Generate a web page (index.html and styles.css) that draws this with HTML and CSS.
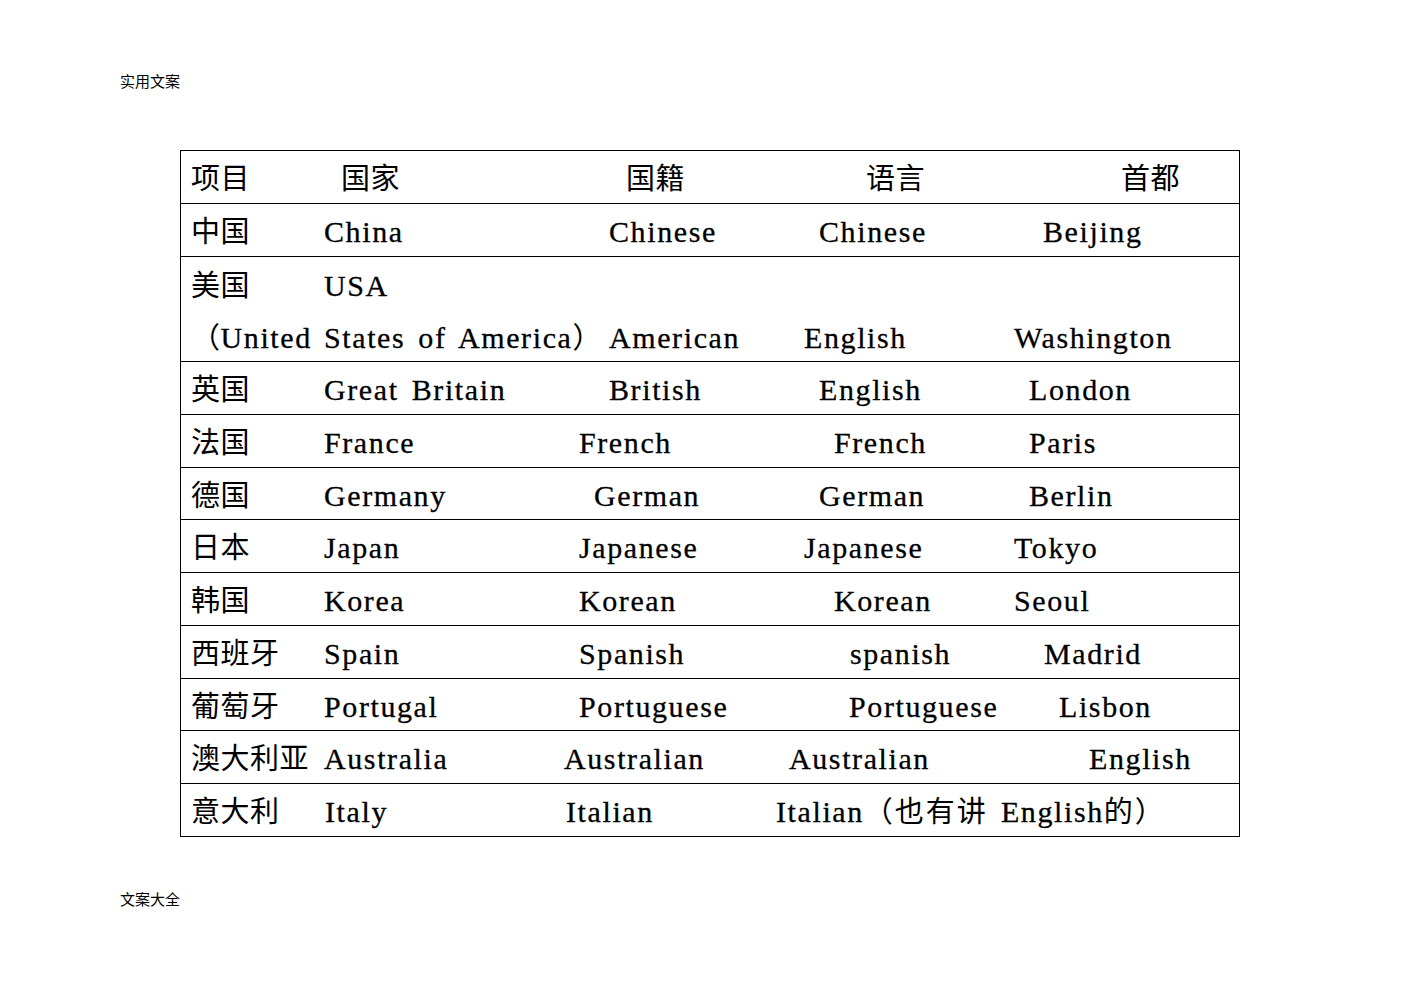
FILE: index.html
```html
<!DOCTYPE html>
<html lang="zh-CN">
<head>
<meta charset="utf-8">
<title>实用文案</title>
<link rel="stylesheet" href="styles.css">
</head>
<body>
<div class="note note-top">实用文案</div>
<div class="tbl">
  <div class="row r-head">
    <div class="c">项目</div><div class="c">国家</div><div class="c">国籍</div><div class="c">语言</div><div class="c">首都</div>
  </div>
  <div class="row r-cn">
    <div class="c">中国</div><div class="c"><span class="lat">China</span></div><div class="c"><span class="lat">Chinese</span></div><div class="c"><span class="lat">Chinese</span></div><div class="c"><span class="lat">Beijing</span></div>
  </div>
  <div class="row row-double">
    <div class="line r-us1">
      <div class="c">美国</div><div class="c"><span class="lat">USA</span></div>
    </div>
    <div class="line r-us2">
      <div class="c">（<span class="lat">United</span></div><div class="c"><span class="lat">States of America</span>）</div><div class="c"><span class="lat">American</span></div><div class="c"><span class="lat">English</span></div><div class="c"><span class="lat">Washington</span></div>
    </div>
  </div>
  <div class="row r-uk">
    <div class="c">英国</div><div class="c"><span class="lat">Great Britain</span></div><div class="c"><span class="lat">British</span></div><div class="c"><span class="lat">English</span></div><div class="c"><span class="lat">London</span></div>
  </div>
  <div class="row r-fr">
    <div class="c">法国</div><div class="c"><span class="lat">France</span></div><div class="c"><span class="lat">French</span></div><div class="c"><span class="lat">French</span></div><div class="c"><span class="lat">Paris</span></div>
  </div>
  <div class="row r-de">
    <div class="c">德国</div><div class="c"><span class="lat">Germany</span></div><div class="c"><span class="lat">German</span></div><div class="c"><span class="lat">German</span></div><div class="c"><span class="lat">Berlin</span></div>
  </div>
  <div class="row r-jp">
    <div class="c">日本</div><div class="c"><span class="lat">Japan</span></div><div class="c"><span class="lat">Japanese</span></div><div class="c"><span class="lat">Japanese</span></div><div class="c"><span class="lat">Tokyo</span></div>
  </div>
  <div class="row r-kr">
    <div class="c">韩国</div><div class="c"><span class="lat">Korea</span></div><div class="c"><span class="lat">Korean</span></div><div class="c"><span class="lat">Korean</span></div><div class="c"><span class="lat">Seoul</span></div>
  </div>
  <div class="row r-es">
    <div class="c">西班牙</div><div class="c"><span class="lat">Spain</span></div><div class="c"><span class="lat">Spanish</span></div><div class="c"><span class="lat">spanish</span></div><div class="c"><span class="lat">Madrid</span></div>
  </div>
  <div class="row r-pt">
    <div class="c">葡萄牙</div><div class="c"><span class="lat">Portugal</span></div><div class="c"><span class="lat">Portuguese</span></div><div class="c"><span class="lat">Portuguese</span></div><div class="c"><span class="lat">Lisbon</span></div>
  </div>
  <div class="row r-au">
    <div class="c">澳大利亚</div><div class="c"><span class="lat">Australia</span></div><div class="c"><span class="lat">Australian</span></div><div class="c"><span class="lat">Australian</span></div><div class="c"><span class="lat">English</span></div>
  </div>
  <div class="row r-it">
    <div class="c">意大利</div><div class="c"><span class="lat">Italy</span></div><div class="c"><span class="lat">Italian</span></div><div class="c mix"><span class="lat">Italian</span>（也有讲<span class="lat"> English</span>的）</div>
  </div>
</div>
<div class="note note-bottom">文案大全</div>
</body>
</html>
```

FILE: styles.css
```css
html, body {
  margin: 0;
  padding: 0;
  background: #ffffff;
  color: #000000;
}

body {
  font-family: "Noto Sans CJK SC", "Liberation Sans", sans-serif;
}

.note {
  margin-left: 120px;
  font-size: 15px;
  line-height: 20px;
  color: #000;
}

.note-top {
  padding-top: 71px;
}

.note-bottom {
  margin-top: 52px;
}

.tbl {
  margin-top: 59px;
  margin-left: 180px;
  width: 1058px;
  border: 1px solid #000;
  border-bottom: none;
}

.row {
  display: grid;
  padding-left: 10px;
  border-bottom: 1px solid #000;
  line-height: 51.77px;
  height: 51.77px;
}

.row-double {
  display: block;
  height: auto;
  line-height: 52.25px;
}

.line {
  display: grid;
  height: 52.25px;
}

.c {
  font-family: "Noto Sans CJK SC", sans-serif;
  font-size: 29px;
  letter-spacing: 0.5px;
  white-space: pre;
}

.mix {
  letter-spacing: 2px;
}

.lat {
  font-family: "Liberation Serif", "DejaVu Serif", serif;
  font-size: 30px;
  line-height: 1;
  letter-spacing: 1.6px;
  word-spacing: 4px;
  -webkit-text-stroke: 0.3px #000;
}

.r-head { grid-template-columns: 150px 285px 240px 255px 1fr; }
.r-cn   { grid-template-columns: 133px 285px 210px 224px 1fr; }
.r-us1  { grid-template-columns: 133px 1fr; }
.r-us2  { grid-template-columns: 133px 285px 195px 210px 1fr; }
.r-uk   { grid-template-columns: 133px 285px 210px 210px 1fr; }
.r-fr   { grid-template-columns: 133px 255px 255px 195px 1fr; }
.r-de   { grid-template-columns: 133px 270px 225px 210px 1fr; }
.r-jp   { grid-template-columns: 133px 255px 225px 210px 1fr; }
.r-kr   { grid-template-columns: 133px 255px 255px 180px 1fr; }
.r-es   { grid-template-columns: 133px 255px 271px 194px 1fr; }
.r-pt   { grid-template-columns: 133px 255px 270px 210px 1fr; }
.r-au   { grid-template-columns: 133px 240px 225px 300px 1fr; }
.r-it   { grid-template-columns: 134px 241px 210px 1fr; }
```
